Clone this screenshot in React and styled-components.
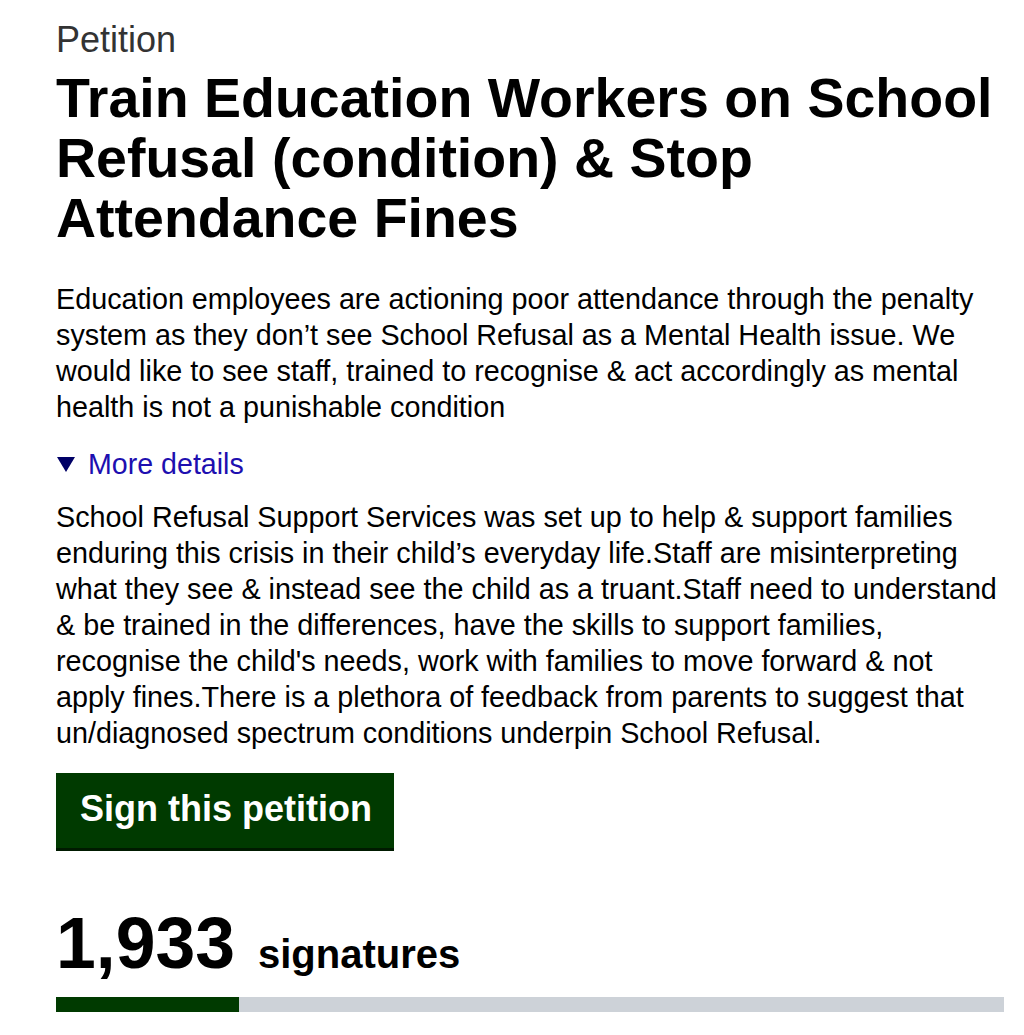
import React from "react";
import styled, { createGlobalStyle } from "styled-components";

const GlobalStyle = createGlobalStyle`
  body {
    margin: 0;
    background: #ffffff;
    font-family: "Liberation Sans", Arial, sans-serif;
    color: #000000;
  }
`;

const Page = styled.main`
  padding: 20px 20px 0 56px;
  max-width: 948px;
`;

const Caption = styled.span`
  display: block;
  font-size: 36px;
  line-height: 40px;
  color: #333333;
`;

const Title = styled.h1`
  margin: 8px 0 33px;
  font-size: 55.5px;
  line-height: 60px;
  font-weight: 700;
  color: #000000;
`;

const Lead = styled.p`
  margin: 0 0 21px;
  font-size: 28.75px;
  line-height: 36px;
`;

const Details = styled.details`
  margin-bottom: 22px;
`;

const Summary = styled.summary`
  display: flex;
  align-items: center;
  list-style: none;
  cursor: pointer;
  font-size: 28.6px;
  line-height: 36px;
  color: #1d0fb0;

  &::-webkit-details-marker {
    display: none;
  }

  &::before {
    content: "";
    width: 0;
    height: 0;
    margin: 0 13px 0 1px;
    border-left: 9px solid transparent;
    border-right: 9px solid transparent;
    border-top: 15px solid #000066;
  }
`;

const DetailsText = styled.p`
  margin: 17px 0 0;
  font-size: 28.75px;
  line-height: 36px;
`;

const SignButton = styled.button`
  display: inline-block;
  margin: 0 0 52px;
  padding: 12px 22px 15px 24px;
  border: 0;
  border-bottom: 3px solid #001a00;
  background: #003a00;
  color: #ffffff;
  font-family: inherit;
  font-size: 36px;
  line-height: 48px;
  font-weight: 700;
  cursor: pointer;
`;

const Count = styled.p`
  margin: 0 0 3px;
  font-size: 71.5px;
  line-height: 80px;
  font-weight: 700;
`;

const Number = styled.span`
  margin-right: 23px;
`;

const Label = styled.span`
  font-size: 40px;
`;

const Progress = styled.div`
  height: 15px;
  background: #cdd2d8;
`;

const Fill = styled.div`
  height: 100%;
  background: #003a00;
`;

const signatures = 1933;
const goal = 10000;

export default function App() {
  return (
    <Page>
      <GlobalStyle />
      <Caption>Petition</Caption>
      <Title>
        Train Education Workers on School Refusal (condition) &amp; Stop
        Attendance Fines
      </Title>
      <Lead>
        Education employees are actioning poor attendance through the penalty
        system as they don’t see School Refusal as a Mental Health issue. We
        would like to see staff, trained to recognise &amp; act accordingly as
        mental health is not a punishable condition
      </Lead>
      <Details open>
        <Summary>More details</Summary>
        <DetailsText>
          School Refusal Support Services was set up to help &amp; support
          families enduring this crisis in their child’s everyday life.Staff
          are misinterpreting what they see &amp; instead see the child as a
          truant.Staff need to understand &amp; be trained in the differences,
          have the skills to support families, recognise the child's needs,
          work with families to move forward &amp; not apply fines.There is a
          plethora of feedback from parents to suggest that un/diagnosed
          spectrum conditions underpin School Refusal.
        </DetailsText>
      </Details>
      <SignButton type="button">Sign this petition</SignButton>
      <Count>
        <Number>{signatures.toLocaleString("en-GB")}</Number>
        <Label>signatures</Label>
      </Count>
      <Progress>
        <Fill style={{ width: `${(signatures / goal) * 100}%` }} />
      </Progress>
    </Page>
  );
}
